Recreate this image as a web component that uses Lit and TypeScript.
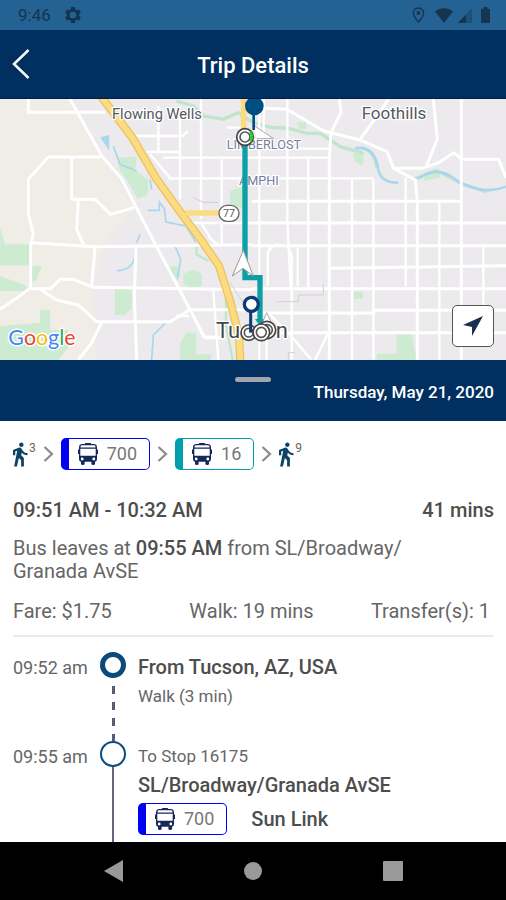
import { LitElement, html, svg, css } from "lit";
import { customElement, property } from "lit/decorators.js";

@customElement("status-bar")
class StatusBar extends LitElement {
  static styles = css`
    :host { display: flex; align-items: center; justify-content: space-between; height: 30px; padding: 0 16px 0 18px; background: #246293; color: #14344f; font: 17px/30px Roboto, "Noto Sans", sans-serif; }
    .group { display: flex; align-items: center; gap: 12px; }
    .right { gap: 5px; }
    .pin { margin-right: 5px; }
    .battery { margin-left: 4px; }
    svg { display: block; fill: currentColor; }
  `;
  render() {
    return html`
      <div class="group">
        <span>9:46</span>
        <svg width="20" height="20" viewBox="0 0 24 24"><path d="M19.14 12.94c.04-.3.06-.61.06-.94 0-.32-.02-.64-.07-.94l2.03-1.58a.49.49 0 0 0 .12-.61l-1.92-3.32a.49.49 0 0 0-.59-.22l-2.39.96c-.5-.38-1.03-.7-1.62-.94l-.36-2.54a.48.48 0 0 0-.48-.41h-3.84c-.24 0-.43.17-.47.41l-.36 2.54c-.59.24-1.13.57-1.62.94l-2.39-.96a.48.48 0 0 0-.59.22L2.74 8.87c-.12.21-.08.47.12.61l2.03 1.58c-.05.3-.09.63-.09.94s.02.64.07.94l-2.03 1.58a.49.49 0 0 0-.12.61l1.92 3.32c.12.22.37.29.59.22l2.39-.96c.5.38 1.03.7 1.62.94l.36 2.54c.05.24.24.41.48.41h3.84c.24 0 .44-.17.47-.41l.36-2.54c.59-.24 1.13-.56 1.62-.94l2.39.96c.22.08.47 0 .59-.22l1.92-3.32a.48.48 0 0 0-.12-.61l-2.01-1.58zM12 16a4 4 0 1 1 0-8 4 4 0 0 1 0 8z" /></svg>
      </div>
      <div class="group right">
        <svg class="pin" width="13" height="16" viewBox="0 0 13 16"><path d="M6.500 1C3.500 1 1.400 3.200 1.400 6c0 3.500 5.100 9 5.100 9s5.100-5.500 5.100-9c0-2.800-2.100-5-5.100-5z" fill="none" stroke="currentColor" stroke-width="1.400" /><circle cx="6.500" cy="6" r="1.900" /></svg>
        <svg width="18" height="15" viewBox="0 0 18 15"><path d="M0 3.500C5-.8 13-.8 18 3.500L9 15z" /></svg>
        <svg width="14" height="15" viewBox="0 0 14 15"><path d="M14 0v15H0z" opacity=".4" /><path d="M8 6.400V15H0z" /></svg>
        <svg class="battery" width="9" height="16" viewBox="0 0 9 16"><path d="M2.500 0h4v1.800H8.200a.8.800 0 0 1 .8.800v12.600a.8.800 0 0 1-.8.800H.8a.8.800 0 0 1-.8-.8V2.600a.8.800 0 0 1 .8-.8h1.700z" /></svg>
      </div>`;
  }
}

@customElement("route-badge")
class RouteBadge extends LitElement {
  @property() route = "";
  @property({ reflect: true }) line = "blue";
  static styles = css`
    :host { --line: #0000f0; display: inline-flex; align-items: center; box-sizing: border-box; height: 32px; padding: 0 12px 0 9px; gap: 9px; border: 1px solid var(--line); border-left-width: 8px; border-radius: 5px; background: #fff; color: #777; font: 18px/30px Roboto, "Noto Sans", sans-serif; }
    :host([line="teal"]) { --line: #009fad; }
    svg { display: block; }
  `;
  render() {
    return html`
      <svg width="20" height="22" viewBox="0 0 20 22">
        <path d="M3.500 1h3.200q.3-1 1-1h4.600q.7 0 1 1h3.200q2.500.3 2.500 3v12q0 2.500-2 2.800H3q-2-.3-2-2.800V4q0-2.700 2.500-3z" fill="#14285a" />
        <path d="M3.500 2.300h13q1 .2 1 1.700v.4h-15V4q0-1.500 1-1.700zM2.300 5.800h15.400v7H2.300z" fill="#fff" />
        <circle cx="4.200" cy="16" r="1.400" fill="#fff" /><circle cx="15.800" cy="16" r="1.400" fill="#fff" />
        <path d="M0 6.500h1.200v4.500H0zM18.800 6.500H20v4.500h-1.200zM3 18h3.600v3q0 1-1.800 1T3 21zM13.400 18H17v3q0 1-1.800 1t-1.800-1z" fill="#14285a" />
      </svg>
      <span>${this.route}</span>`;
  }
}

@customElement("trip-map")
class TripMap extends LitElement {
  static styles = css`
    :host { display: block; position: relative; overflow: hidden; height: 261px; background: #eceaed; }
    .map { display: block; width: 100%; height: 100%; }
    .locate { position: absolute; right: 12px; bottom: 13px; width: 42px; height: 42px; padding: 0; display: grid; place-items: center; border: 1px solid #555; border-radius: 5px; background: #fff; }
    text { font-family: Roboto, "Noto Sans", sans-serif; paint-order: stroke; stroke: #fff; stroke-width: 8px; stroke-linejoin: round; fill: #555960; }
    .town { font-size: 44px; }
    .foothills { font-size: 51px; }
    .city { font-size: 66px; fill: #44474c; }
    .area { font-size: 38px; fill: #7480a0; }
    .shield { font-size: 32px; stroke: none; }
    .logo { font: 64px Lato, sans-serif; stroke-width: 9px; }
    .land { fill: #f0ece6; }
    .park { fill: #cdebd0; }
    .roads { fill: none; stroke: #fff; stroke-width: 9; stroke-linejoin: round; }
    .thin { stroke-width: 7; }
    .water { fill: none; stroke: #a9d6ef; stroke-width: 5; }
    .wash { fill: none; stroke: #bfe5cb; stroke-width: 10; }
    .rail { fill: none; stroke: #d1d0d3; stroke-width: 3; }
    .hwy-edge { fill: none; stroke: #edc45e; stroke-width: 25; }
    .hwy { fill: none; stroke: #fbdc83; stroke-width: 17; }
    .trip { fill: none; stroke: #0d9fa6; stroke-width: 16; }
    .blue { fill: #4285f4; } .red { fill: #ea4335; } .yellow { fill: #fbbc05; } .green { fill: #34a853; }
  `;
  private ring(x: number, y: number, r = 25) {
    return svg`<circle cx=${x} cy=${y} r=${r} fill="#fff" stroke="#444" stroke-width="5" /><circle cx=${x} cy=${y} r=${r - 10} fill="#fff" stroke="#555" stroke-width="5" />`;
  }
  render() {
    return html`
      <svg class="map" viewBox="0 9 1518 783" preserveAspectRatio="xMidYMid slice" role="img" aria-label="Map of the trip through Tucson">
        <path class="land" d="M0 0H210L310 185L405 335L330 420L280 570L290 792H0z" />
        <g class="park">
          <path d="M0 395L15 445H88V508H0zM95 510h30l-18 46H92zM0 540l80 30v15H0zM0 690l120-10V642h30v60h55v50l-30 40H0z" />
          <path d="M350 185l60-3-5 40 40 30-2 45-30 12-28-50-25-35zM345 580h50v55l-20 22h-30zM505 520q20-20 35 0v22h-25zM550 535q30-25 55 0v35l-30 8-25-15zM690 285l45-15v70l-45-15zM540 745l18-35h30v65h45v17h-93zM1190 710h45l15 82H1130v-18h60zM1060 172h30v25l-5 12-20-12zM888 78h30v20h-20zM1062 587h27v22h-27zM1275 235l45-10v20l-50 10z" />
        </g>
        <g class="wash">
          <path d="M530 15l50 15 30 30 60 10 45-20 41 28 55 16 55 3 55 15 40 0 60 40 70 20" />
          <path d="M590 450v25l35 20M630 485q45 25 48 100v100l20 107" stroke-width="7" />
          <path d="M1085 155q40 10 45 60M1240 250l70-26 80 40 70 24" />
        </g>
        <g class="water">
          <path d="M305 125l20 30v-35z" fill="#a9d6ef" />
          <path d="M340 150l20 55 50 20M450 250l5 30M443 343h35v-25l15 20 5 40 60 12 30 50M420 415l-10 25M405 460q5 60-55 65M525 450l17 40-10 60M455 792l5-75 40-40" />
          <path d="M1065 157q60-10 70 65 10 40 60 38M1255 248q60-45 120 10 80 40 143 14" stroke-width="8" />
        </g>
        <g class="roads">
          <path d="M85 9v40h230M210 9l95 170 60 70 95 185 110 206 45 85h60" />
          <path d="M305 183H145L85 250v105l15 60-8 30v130L45 610 0 640M215 185v125h70l47 45 70-20M235 310l-5 90 20 45M92 440l190 12 476-6M285 455l-10 115M92 578h60l28-28h40l60 24 478 7M120 580l50 32 65 15 55 50h220l60-36h200M305 680l-30 60-40 52M408 450l-5 150 7 192" />
          <path d="M756 35l105 5 110 65 110 27 80 35 20 50 65 35 6 65v475M1181 217h85l50-17 45-30 25 20h110l22 55M1018 9l5 40-30 60-5 75v608M1080 130l55-75 30-45M1300 9l12 120-32 80M1384 9v783" />
          <path d="M756 316h625M756 381h762M756 449h762M756 578h762M756 651h365l5-8h392M756 710h762M990 517l528-8" />
        </g>
        <g class="roads thin">
          <path d="M400 120h148l15-15M440 168h100M490 185h500M505 247h615M570 381h186M540 60v250M475 30v135M603 9v360M665 190v255M450 175l60 70M603 380l30 50 20 15M680 95h50M528 660h40M640 585l15 207M756 158h230M778 9v783M862 9v365l10 205M925 185v390M1056 250v540M1120 250v540M1217 245v325M1318 320v472M1450 450v180M803 570V470q20-35 40-20M860 450q20 20 15 60v280M893 455v115M791 9v100M803 650l70 70 60 70M985 710l-40 82M800 730v62M570 640l40 82h45" />
        </g>
        <g class="rail"><path d="M580 305l30 14h45M690 560l66 100M830 617h65v-20h75v-32M865 792v-22h20" /></g>
        <path class="hwy-edge" d="M302 0l95 125 70 120 75 105 60 80 55 80 35 110 25 100 4 75" />
        <path class="hwy" d="M302 0l95 125 70 120 75 105 60 80 55 80 35 110 25 100 4 75" />
        <path class="hwy" d="M555 351h110M731 0v125" />
        <rect x="657" y="328" width="60" height="48" rx="24" fill="#fff" stroke="#666" stroke-width="4" />
        <text class="shield" x="687" y="363" text-anchor="middle">77</text>
        <text class="town" x="336" y="70">Flowing Wells</text>
        <text class="foothills" x="1182" y="70" text-anchor="middle">Foothills</text>
        <text class="area" x="680" y="159">LIMBERLOST</text>
        <text class="area" x="717" y="267">AMPHI</text>
        <text class="city" x="648" y="725">Tucson</text>
        <path class="trip" d="M735 140V545H780V670" />
        <path d="M765 669h30l-15 22z" fill="#0d9fa6" />
        <path d="M730 463l30 77-31-23-32 23z" fill="#fff" stroke="#999" stroke-width="3" />
        <path d="M756 85l65 43h-50" fill="#fff" stroke="#aaa" stroke-width="3" />
        <path d="M761 50v52" stroke="#004e82" stroke-width="8" />
        <circle cx="763" cy="30" r="28" fill="#004e82" />
        ${this.ring(735, 123)}
        <path d="M750 108a22 22 0 0 1 1 28" fill="none" stroke="#27d127" stroke-width="8" />
        <path d="M800 650l28 62-28-16-26 16z" fill="#fff" stroke="#aaa" stroke-width="3" />
        ${this.ring(746, 710, 23)}${this.ring(801, 702, 26)}
        <path d="M752 640v70" stroke="#0b3c74" stroke-width="9" />
        <circle cx="754" cy="625" r="21" fill="#fff" stroke="#0b3c74" stroke-width="10" />
        ${this.ring(784, 709)}
        <text class="logo" x="25" y="748"><tspan class="blue">G</tspan><tspan class="red">o</tspan><tspan class="yellow">o</tspan><tspan class="blue">g</tspan><tspan class="green">l</tspan><tspan class="red">e</tspan></text>
      </svg>
      <button class="locate" aria-label="Show my location"><svg width="20" height="20" viewBox="0 0 20 20"><path d="M20 0L0 9l9 2 0 9z" fill="#17304f" /></svg></button>`;
  }
}

const walker = (minutes: string) => html`<span class="walk"><svg width="15" height="25" viewBox="6 1 13.500 22.500"><path d="M13.500 5.500c1.100 0 2-.9 2-2s-.9-2-2-2-2 .9-2 2 .9 2 2 2zM9.800 8.900L7 23h2.500l1.800-7.500 2 2V23h2.500v-7.500l-2.400-2.500.6-2.500C15 12 16.800 13 19 13v-2c-1.900 0-3.500-1-4.300-2.400l-1-1.600c-.4-.6-1-1-1.700-1-.3 0-.5.1-.8.1L6 8.300V13h2V9.600z" fill="#0e4267" /></svg><sup>${minutes}</sup></span>`;
const chevron = html`<svg width="11" height="16" viewBox="0 0 11 16"><path d="M1.500 1L9 8l-7.500 7" fill="none" stroke="#8b8b8b" stroke-width="2.200" /></svg>`;

@customElement("app-root")
class AppRoot extends LitElement {
  static styles = css`
    :host { display: flex; flex-direction: column; min-height: 100vh; background: #fff; color: #666; font: 20px/24px Roboto, "Noto Sans", sans-serif; }
    header { display: grid; grid-template-columns: 44px 1fr 44px; align-items: center; height: 68px; border-bottom: 1px solid #001d4c; background: #002f60; color: #fff; }
    h1 { margin: 0; font-size: 22px; font-weight: 500; line-height: 28px; text-align: center; padding-top: 4px; }
    button { border: 0; padding: 0; background: none; color: inherit; }
    .back { justify-self: start; height: 44px; padding-left: 12px; }
    svg { display: block; }
    .sheet { position: relative; display: flex; align-items: center; justify-content: flex-end; height: 61px; box-sizing: border-box; padding: 2px 12px 0; background: #002f60; color: #fff; font-size: 17px; font-weight: 500; }
    .handle { position: absolute; top: 17px; left: 50%; width: 36px; height: 5px; margin-left: -18px; border-radius: 3px; background: #a3a5ae; }
    main { flex: 1; display: flex; flex-direction: column; padding: 17px 12px 0 13px; }
    .legs { display: flex; align-items: center; gap: 7px; margin-bottom: 28px; }
    .walk { display: flex; }
    sup { margin-left: 1px; font-size: 12px; line-height: 12px; }
    .row { display: flex; justify-content: space-between; }
    b, h2 { color: #4d4d4d; font-weight: 500; }
    .when { margin-bottom: 15px; }
    p { margin: 0; }
    .leaves { max-width: 400px; line-height: 23px; margin-bottom: 16px; }
    .facts { display: grid; grid-template-columns: 1fr auto 1fr; padding: 0 4px 12px 0; border-bottom: 2px solid #ececec; }
    .facts :last-child { text-align: right; }
    ol { flex: 1; display: flex; flex-direction: column; margin: 0; padding: 15px 0 0; list-style: none; }
    .step { display: grid; grid-template-columns: 75px 50px 1fr; }
    .step:last-child { flex: 1; }
    time { font-size: 18px; padding-top: 4px; }
    .track { display: flex; flex-direction: column; align-items: center; }
    .dot { box-sizing: border-box; width: 26px; height: 26px; border: 2px solid #0a4a7c; border-radius: 50%; }
    .dot.start { border-width: 5px; }
    .rail { flex: 1; width: 2px; background: #626682; }
    .rail.dashed { width: 3px; background: repeating-linear-gradient(to bottom, transparent 0 8px, #555a76 8px 16px); }
    h2 { margin: 0; font-size: 20px; line-height: 24px; }
    .first { padding: 3px 0 33px; }
    .first p { margin-top: 5px; }
    .small { font-size: 17px; }
    .second { padding-top: 3px; }
    .stop { margin-top: 5px; }
    .ride { display: flex; align-items: center; gap: 24px; margin: 6px 0 7px; }
    nav { display: flex; justify-content: space-around; align-items: center; height: 58px; padding: 0 43px; background: #000; color: #999; }
  `;
  render() {
    return html`
      <status-bar></status-bar>
      <header>
        <button class="back" aria-label="Back"><svg width="18" height="30" viewBox="0 0 18 30"><path d="M16.500 1L2 15l14.500 14" fill="none" stroke="#fff" stroke-width="2.500" /></svg></button>
        <h1>Trip Details</h1>
      </header>
      <trip-map></trip-map>
      <div class="sheet"><span class="handle"></span>Thursday, May 21, 2020</div>
      <main>
        <div class="legs">
          ${walker("3")}${chevron}<route-badge route="700"></route-badge>${chevron}<route-badge route="16" line="teal"></route-badge>${chevron}${walker("9")}
        </div>
        <div class="row when"><b>09:51 AM - 10:32 AM</b><b>41 mins</b></div>
        <p class="leaves">Bus leaves at <b>09:55 AM</b> from SL/Broadway/<wbr>Granada AvSE</p>
        <div class="facts"><span>Fare: $1.75</span><span>Walk: 19 mins</span><span>Transfer(s): 1</span></div>
        <ol>
          <li class="step">
            <time>09:52 am</time>
            <div class="track"><span class="dot start"></span><span class="rail dashed"></span></div>
            <div class="first"><h2>From Tucson, AZ, USA</h2><p class="small">Walk (3 min)</p></div>
          </li>
          <li class="step">
            <time>09:55 am</time>
            <div class="track"><span class="dot"></span><span class="rail"></span></div>
            <div class="second"><p class="small">To Stop 16175</p><h2 class="stop">SL/Broadway/Granada AvSE</h2>
              <div class="ride"><route-badge route="700"></route-badge><h2>Sun Link</h2></div>
            </div>
          </li>
        </ol>
      </main>
      <nav aria-label="System">
        <button aria-label="Back"><svg width="19" height="22" viewBox="0 0 19 22"><path d="M19 0v22L0 11z" fill="currentColor" /></svg></button>
        <button aria-label="Home"><svg width="18" height="18" viewBox="0 0 18 18"><circle cx="9" cy="9" r="9" fill="currentColor" /></svg></button>
        <button aria-label="Recent apps"><svg width="20" height="20" viewBox="0 0 20 20"><rect width="20" height="20" rx="1" fill="currentColor" /></svg></button>
      </nav>`;
  }
}
